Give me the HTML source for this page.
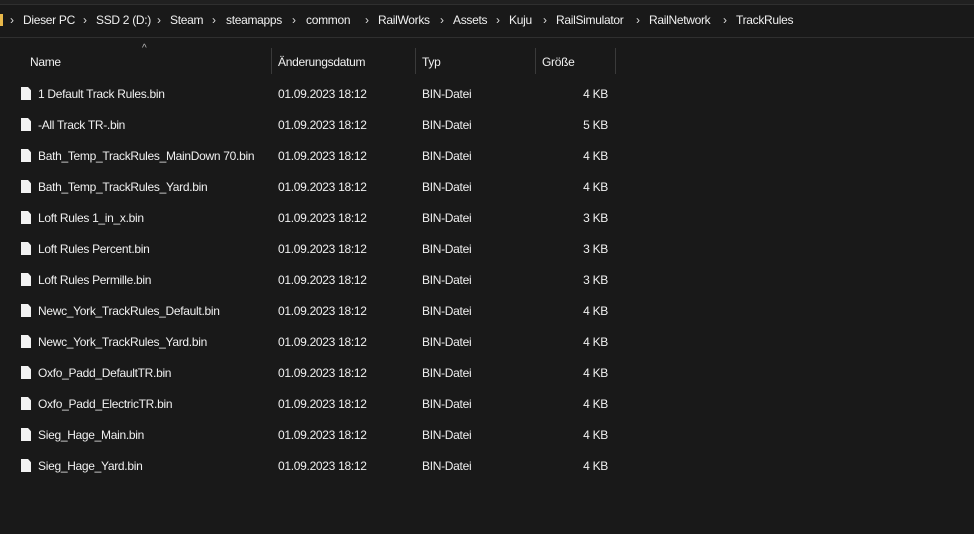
<!DOCTYPE html>
<html><head><style>
body{margin:0;width:974px;height:534px;background:#191919;font-family:"Liberation Sans",sans-serif;font-size:12px;letter-spacing:-0.3px;color:#f0f0f0;position:relative;overflow:hidden}
.a{position:absolute;white-space:nowrap}
.sep{color:#ddd;font-size:12px}
.vl{position:absolute;width:1px;top:48px;height:26px;background:#3a3a3a}
.ic{position:absolute;width:10px;height:13px;background:#f2f2f2;clip-path:polygon(0 0,70% 0,100% 25%,100% 100%,0 100%)}
</style></head><body>
<div class="a" style="left:0;top:0;width:974px;height:4px;background:#202020"></div>
<div class="a" style="left:0;top:4px;width:974px;height:1px;background:#2f2f2f"></div>
<div class="a" style="left:0;top:37px;width:974px;height:1px;background:#2f2f2f"></div>
<div class="a" style="left:0;top:14px;width:3px;height:12px;background:#e8b84a"></div>
<div class="a" style="top:13px;left:0;width:974px">
<span class="a sep" style="left:10px">›</span><span class="a" style="left:23px">Dieser PC</span>
<span class="a sep" style="left:83px">›</span><span class="a" style="left:96px">SSD 2 (D:)</span>
<span class="a sep" style="left:157px">›</span><span class="a" style="left:170px">Steam</span>
<span class="a sep" style="left:212px">›</span><span class="a" style="left:226px">steamapps</span>
<span class="a sep" style="left:292px">›</span><span class="a" style="left:306px">common</span>
<span class="a sep" style="left:365px">›</span><span class="a" style="left:378px">RailWorks</span>
<span class="a sep" style="left:440px">›</span><span class="a" style="left:453px">Assets</span>
<span class="a sep" style="left:496px">›</span><span class="a" style="left:509px">Kuju</span>
<span class="a sep" style="left:543px">›</span><span class="a" style="left:556px">RailSimulator</span>
<span class="a sep" style="left:636px">›</span><span class="a" style="left:649px">RailNetwork</span>
<span class="a sep" style="left:723px">›</span><span class="a" style="left:736px">TrackRules</span>
</div>
<div class="a" style="left:142px;top:43px;color:#bbb;font-size:10px">^</div>
<div class="a" style="left:30px;top:55px">Name</div>
<div class="vl" style="left:271px"></div><div class="a" style="left:278px;top:55px">Änderungsdatum</div>
<div class="vl" style="left:415px"></div><div class="a" style="left:422px;top:55px">Typ</div>
<div class="vl" style="left:535px"></div><div class="a" style="left:542px;top:55px">Größe</div>
<div class="vl" style="left:615px"></div>
<div id="rows"></div>
<script>
var n=["1 Default Track Rules.bin","-All Track TR-.bin","Bath_Temp_TrackRules_MainDown 70.bin","Bath_Temp_TrackRules_Yard.bin","Loft Rules 1_in_x.bin","Loft Rules Percent.bin","Loft Rules Permille.bin","Newc_York_TrackRules_Default.bin","Newc_York_TrackRules_Yard.bin","Oxfo_Padd_DefaultTR.bin","Oxfo_Padd_ElectricTR.bin","Sieg_Hage_Main.bin","Sieg_Hage_Yard.bin"];
var s=[4,5,4,4,3,3,3,4,4,4,4,4,4],h="";
n.forEach(function(x,i){var y=87+i*31;
h+='<div class="ic" style="left:21px;top:'+y+'px"></div><div class="a" style="left:38px;top:'+y+'px">'+x+'</div><div class="a" style="left:278px;top:'+y+'px">01.09.2023 18:12</div><div class="a" style="left:422px;top:'+y+'px">BIN-Datei</div><div class="a" style="left:548px;width:60px;text-align:right;top:'+y+'px">'+s[i]+' KB</div>';});
document.getElementById('rows').innerHTML=h;
</script>
</body></html>
